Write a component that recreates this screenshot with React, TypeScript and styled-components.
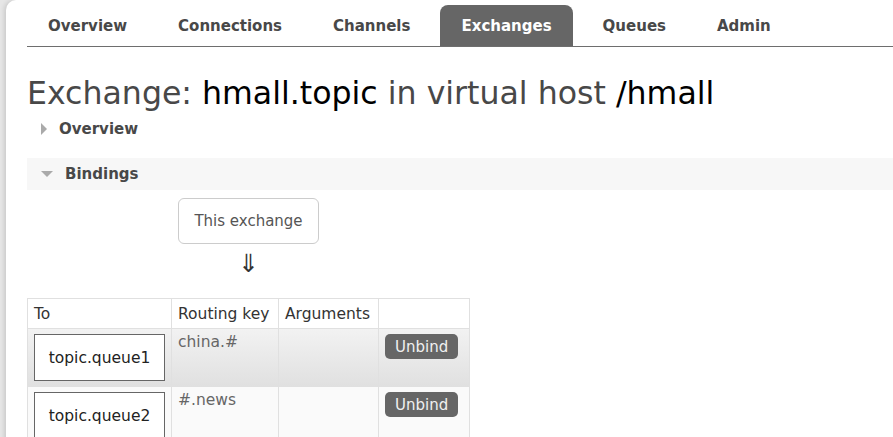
import React from 'react';
import styled, { createGlobalStyle } from 'styled-components';

const GlobalStyle = createGlobalStyle`
  html, body {
    margin: 0;
    padding: 0;
    background: #e6e6e6;
    font-family: "DejaVu Sans", Verdana, sans-serif;
    overflow: hidden;
  }
`;

const tabs = ['Overview', 'Connections', 'Channels', 'Exchanges', 'Queues', 'Admin'];

const bindings = [
  { queue: 'topic.queue1', key: 'china.#', shaded: true },
  { queue: 'topic.queue2', key: '#.news', shaded: false },
];

const Page = styled.div`
  margin-left: 6px;
  min-height: 437px;
  background: #fff;
  border-top-left-radius: 10px;
  box-shadow: -2px 0 4px rgba(0, 0, 0, 0.12);
  padding-top: 5px;
`;

const Nav = styled.ul`
  list-style: none;
  margin: 0 0 0 21px;
  padding: 0;
  display: flex;
  gap: 9px;
  border-bottom: 1px solid #6e6e6e;
`;

const Tab = styled.li<{ $active?: boolean }>`
  height: 41px;
  padding: 1px 21px 0;
  box-sizing: border-box;
  display: flex;
  align-items: center;
  font-weight: bold;
  font-size: 15px;
  color: ${p => (p.$active ? '#fff' : '#484848')};
  background: ${p => (p.$active ? '#666' : 'transparent')};
  border-radius: 8px 8px 0 0;
`;

const Main = styled.div`
  padding: 27px 0 0 21px;
`;

const Heading = styled.h1`
  margin: 0;
  font-weight: normal;
  font-size: 31.6px;
  line-height: 38px;
  color: #484848;
  b {
    font-weight: normal;
    color: #000;
  }
`;

const Section = styled.div<{ $open?: boolean }>`
  display: flex;
  align-items: center;
  height: 32px;
  padding-left: 14px;
  gap: 12px;
  font-weight: bold;
  font-size: 15px;
  color: #484848;
  background: ${p => (p.$open ? '#f7f7f7' : 'transparent')};
  margin-top: ${p => (p.$open ? '13px' : '1px')};
`;

const Caret = styled.span<{ $open?: boolean }>`
  width: 0;
  height: 0;
  ${p =>
    p.$open
      ? `border-left: 6px solid transparent; border-right: 6px solid transparent; border-top: 6px solid #aaa;`
      : `border-top: 6px solid transparent; border-bottom: 6px solid transparent; border-left: 6px solid #aaa;`}
`;

const Flow = styled.div`
  display: flex;
  flex-direction: column;
  align-items: flex-start;
  padding: 8px 0 0 151px;
`;

const ExchangeBox = styled.div`
  box-sizing: border-box;
  width: 141px;
  height: 46px;
  border: 1px solid #ccc;
  border-radius: 6px;
  display: flex;
  align-items: center;
  justify-content: center;
  font-size: 15px;
  color: #555;
`;

const Arrow = styled.div`
  width: 141px;
  text-align: center;
  font-size: 25px;
  line-height: 30px;
  color: #333;
  margin-top: 5px;
`;

const Table = styled.table`
  margin-top: 19px;
  border-collapse: collapse;
  font-size: 15.5px;
  color: #484848;
`;

const Th = styled.th<{ $w: number }>`
  width: ${p => p.$w}px;
  height: 30px;
  box-sizing: border-box;
  padding: 0 6px;
  text-align: left;
  font-weight: normal;
  color: #333;
  border: 1px solid #e0e0e0;
`;

const Row = styled.tr<{ $shaded?: boolean }>`
  background: ${p => (p.$shaded ? 'linear-gradient(#f2f2f2, #e0e0e0)' : '#fafafa')};
`;

const Td = styled.td`
  height: 58px;
  box-sizing: border-box;
  padding: 4px 6px;
  vertical-align: top;
  border: 1px solid #e0e0e0;
  color: #666;
`;

const QueueBox = styled.div`
  box-sizing: border-box;
  height: 47px;
  margin-top: 1px;
  border: 1px solid #666;
  background: #fff;
  display: flex;
  align-items: center;
  justify-content: center;
  color: #222;
`;

const UnbindButton = styled.button`
  margin-top: 1px;
  height: 25px;
  padding: 0 10px;
  border: none;
  border-radius: 5px;
  background: #666;
  color: #f0f0f0;
  font-family: "DejaVu Sans", Verdana, sans-serif;
  font-size: 15px;
`;

export default function App() {
  return (
    <>
      <GlobalStyle />
      <Page>
        <Nav>
          {tabs.map(t => (
            <Tab key={t} $active={t === 'Exchanges'}>
              {t}
            </Tab>
          ))}
        </Nav>
        <Main>
          <Heading>
            Exchange: <b>hmall.topic</b> in virtual host <b>/hmall</b>
          </Heading>
          <Section>
            <Caret />
            Overview
          </Section>
          <Section $open>
            <Caret $open />
            Bindings
          </Section>
          <Flow>
            <ExchangeBox>This exchange</ExchangeBox>
            <Arrow>⇓</Arrow>
          </Flow>
          <Table>
            <thead>
              <tr>
                <Th $w={144}>To</Th>
                <Th $w={107}>Routing key</Th>
                <Th $w={100}>Arguments</Th>
                <Th $w={91}></Th>
              </tr>
            </thead>
            <tbody>
              {bindings.map(b => (
                <Row key={b.queue} $shaded={b.shaded}>
                  <Td>
                    <QueueBox>{b.queue}</QueueBox>
                  </Td>
                  <Td>{b.key}</Td>
                  <Td></Td>
                  <Td>
                    <UnbindButton>Unbind</UnbindButton>
                  </Td>
                </Row>
              ))}
            </tbody>
          </Table>
        </Main>
      </Page>
    </>
  );
}
